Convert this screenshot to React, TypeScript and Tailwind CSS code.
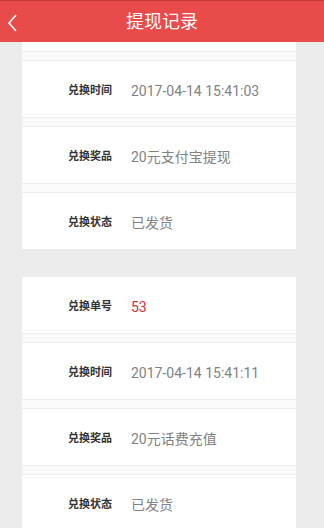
import React from "react";

type Row = { label: string; value: string; red?: boolean };

// first record is scrolled up: its order-number row sits under the header
const records: Row[][] = [
    [
        { label: "兑换时间", value: "2017-04-14 15:41:03" },
        { label: "兑换奖品", value: "20元支付宝提现" },
        { label: "兑换状态", value: "已发货" },
    ],
    [
        { label: "兑换单号", value: "53", red: true },
        { label: "兑换时间", value: "2017-04-14 15:41:11" },
        { label: "兑换奖品", value: "20元话费充值" },
        { label: "兑换状态", value: "已发货" },
    ],
];

function Divider() {
    return <div className="h-[10px] border-y border-[#ededed] bg-[#fafafa]" />;
}

function RecordCard({ rows, scrolled, className }: { rows: Row[]; scrolled?: boolean; className?: string }) {
    return (
        <div className={`ml-[22px] w-[274px] bg-white ${className ?? ""}`}>
            {scrolled && <div className="h-[9px]" />}
            {rows.map((row, i) => (
                <div key={i}>
                    {(i > 0 || scrolled) && <Divider />}
                    <div className="flex h-[56px] items-center pl-[46px] pt-[4px]">
                        <span className="w-[63px] text-[11px] font-semibold text-[#333]">{row.label}</span>
                        <span className={`text-[14px] ${row.red ? "text-[#d2303a]" : "text-[#828282]"}`}>
                            {row.value}
                        </span>
                    </div>
                </div>
            ))}
        </div>
    );
}

export default function App() {
    return (
        <div
            className="flex h-[528px] w-[324px] flex-col overflow-hidden bg-[#ebebeb]"
            style={{ fontFamily: "Roboto, 'Noto Sans CJK SC', sans-serif" }}
        >
            <div className="relative z-10 flex h-[42px] shrink-0 items-center justify-center border-t border-[#c93a3a] bg-[#e94a4a]">
                <span className="absolute left-[7px] top-[13px]">
                    <svg width="11" height="18" viewBox="0 0 11 18" fill="none">
                        <polyline points="9,1 2,9 9,17" stroke="#fff" strokeWidth="1.6" strokeLinejoin="miter" />
                    </svg>
                </span>
                <h1 className="text-[18px] leading-[24px] text-white">提现记录</h1>
            </div>
            <div className="flex-1 overflow-hidden">
                <RecordCard rows={records[0]} scrolled />
                <RecordCard rows={records[1]} className="mt-[28px]" />
            </div>
        </div>
    );
}
